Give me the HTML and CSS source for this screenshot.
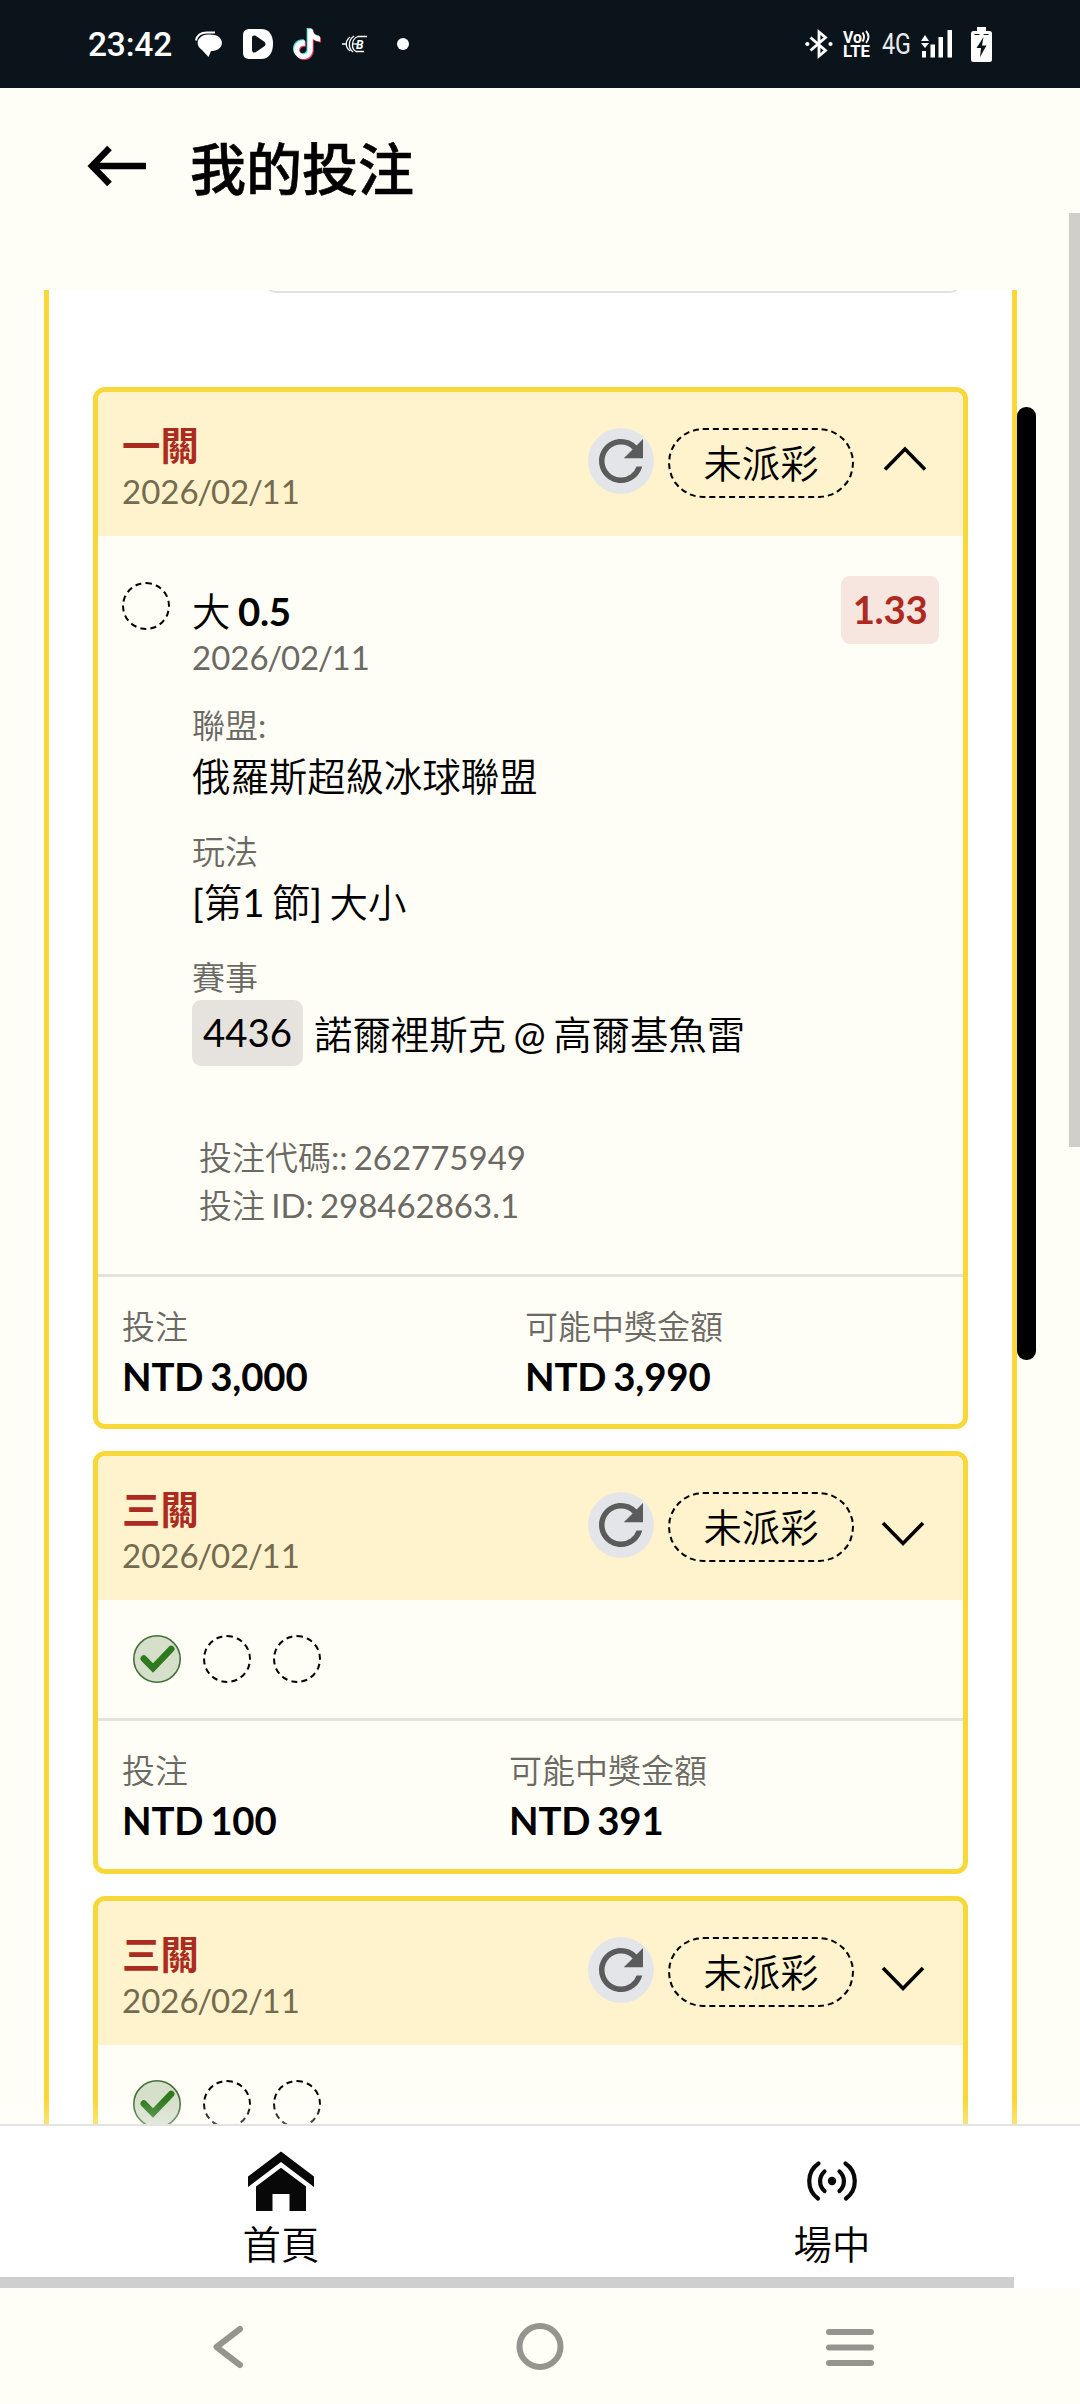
FILE: index.html
```html
<!DOCTYPE html>
<html lang="zh-Hant-TW">
<head>
<meta charset="utf-8">
<title>我的投注</title>
<link rel="stylesheet" href="styles.css">
</head>
<body>
<svg class="defs" width="0" height="0" aria-hidden="true">
  <symbol id="refresh" viewBox="0 0 24 24"><path d="M17.65 6.35A7.958 7.958 0 0 0 12 4c-4.42 0-7.99 3.58-7.99 8s3.57 8 7.99 8c3.73 0 6.84-2.55 7.73-6h-2.08A5.99 5.99 0 0 1 12 18c-3.31 0-6-2.69-6-6s2.69-6 6-6c1.66 0 3.14.69 4.22 1.78L13 11h7V4z"/></symbol>
  <symbol id="note" viewBox="0 0 24 24"><path d="M12.525.02c1.31-.02 2.61-.01 3.91-.02.08 1.53.63 3.09 1.75 4.17 1.12 1.11 2.7 1.62 4.24 1.79v4.03c-1.44-.05-2.89-.35-4.2-.97-.57-.26-1.1-.59-1.62-.93-.01 2.92.01 5.84-.02 8.75-.08 1.4-.54 2.79-1.35 3.94-1.31 1.92-3.58 3.17-5.91 3.21-1.43.08-2.86-.31-4.08-1.03-2.02-1.19-3.44-3.37-3.65-5.71-.02-.5-.03-1-.01-1.49.18-1.9 1.12-3.72 2.58-4.96 1.66-1.44 3.98-2.13 6.15-1.72.02 1.48-.04 2.96-.04 4.44-.99-.32-2.15-.23-3.02.37-.63.41-1.11 1.04-1.36 1.75-.21.51-.15 1.07-.14 1.61.24 1.64 1.82 3.02 3.5 2.87 1.12-.01 2.19-.66 2.77-1.61.19-.33.4-.67.41-1.06.1-1.79.06-3.57.07-5.36.01-4.03-.01-8.05.02-12.07z"/></symbol>
  <symbol id="chevron-up" viewBox="0 0 48 70"><path d="M5 41.5 25 21 45 41.5" fill="none" stroke="#000" stroke-width="3.6"/></symbol>
  <symbol id="chevron-down" viewBox="0 0 48 70"><path d="M3 31 23 51.5 43 31" fill="none" stroke="#000" stroke-width="3.6"/></symbol>
  <symbol id="won" viewBox="0 0 48 48"><circle cx="24" cy="24" r="23.2" fill="#d6dfca" stroke="#44703c" stroke-width="1.6"/><path d="M10.8 23.6 20 33 38.2 14" fill="none" stroke="#2f7a1f" stroke-width="6.6" stroke-linecap="round"/></symbol>
</svg>

<div class="status-bar">
  <span class="clock">23:42</span>
  <svg class="i-msg" width="28" height="28" viewBox="0 0 28 28"><path d="M8 4.5C12 3 20 3 24 6c4 3.5 4 9-.5 12-2 1.500-5 2-7.500 2l-2.500 6L7 19C1 15 1 8 8 4.500z" fill="#fff"/><path d="M1 9.500C2 4 6 1.400 12 1.400h8" fill="none" stroke="#fff" stroke-width="2"/></svg>
  <svg class="i-play" width="30" height="30" viewBox="0 0 30 30"><path d="M7 0h11c8 0 12 6 12 14.500C30 24 26 30 18 30H7c-5 0-7-2-7-7V7c0-5 2-7 7-7z" fill="#fff"/><path d="M9 9c0-2.500 2-3 4-2l8 5.500c2 1.500 2 3.500 0 5L13 23c-2 1.200-4 .5-4-2z" fill="#0c141b"/></svg>
  <svg class="i-tok" width="32" height="34" viewBox="0 0 32 34"><use href="#note" x="0" y="0" width="30" height="32" fill="#3fe0d8"/><use href="#note" x="2" y="2" width="30" height="32" fill="#ee3a5e"/><use href="#note" x="1" y="1" width="30" height="32" fill="#fff"/></svg>
  <svg class="i-bb" width="26" height="18" viewBox="0 0 26 18"><g fill="none" stroke="#fff" stroke-width="1.300"><path d="M0 9h4M8 2C3 6 3 12 8 16M12 1C6 5 6 13 11 17M25 1.500h-9C9 4 9 14 14 16.500h8"/><path d="M10 9h5"/></g><text x="14" y="13.500" class="bb">B</text></svg>
  <svg class="i-dot" width="12" height="12"><circle cx="6" cy="6" r="6" fill="#fff"/></svg>
  <span class="spring"></span>
  <svg class="i-bt" width="28" height="28" viewBox="0 0 28 28"><path d="M5.500 7.500 20.500 20.500 14 26V2l6.500 5.500L5.500 20.500" fill="none" stroke="#fff" stroke-width="2.800"/><circle cx="2.300" cy="14" r="2.100" fill="#fff"/><circle cx="25.500" cy="14" r="2.100" fill="#fff"/></svg>
  <svg class="i-volte" width="28" height="28" viewBox="0 0 28 28"><text x="0" y="12.500" class="vo" textLength="19" lengthAdjust="spacingAndGlyphs">Vo</text><text x="0" y="27.300" class="vo" textLength="27" lengthAdjust="spacingAndGlyphs">LTE</text><path d="M19.500 2.500q3 4.500 0 9M23 .8q5 6 0 12" fill="none" stroke="#fff" stroke-width="1.900"/></svg>
  <svg class="i-4g" width="29" height="28" viewBox="0 0 29 28"><text x="0" y="24" class="net" textLength="29" lengthAdjust="spacingAndGlyphs">4G</text></svg>
  <svg class="i-sig" width="31" height="28" viewBox="0 0 31 28"><path d="M0 11 4 5l4 6zM0 13h8l-4 5zM1 21h4v6.500H1zM9.500 14.500H14v13H9.500zM17.500 7H22v20.500h-4.500zM26.500 0H31v27.500h-4.500z" fill="#fff"/></svg>
  <svg class="i-bat" width="21" height="35" viewBox="0 0 21 35"><path d="M6 0h9v4h3.500Q21 4 21 6.500v26Q21 35 18.500 35h-16Q0 35 0 32.500v-26Q0 4 2.500 4H6z" fill="#fff"/><path d="M12.500 10 5.500 21H10l-1 9 6.500-11.500H11zM3.500 7h5v1h-5zM12.500 7h5v1h-5z" fill="#0c141b"/></svg>
</div>

<header class="page-head">
  <svg width="58" height="40" viewBox="0 0 58 40"><path d="M58 20H4M21.500 2 4 20l17.500 18" fill="none" stroke="#000" stroke-width="6.500"/></svg>
  <h1>我的投注</h1>
</header>

<main class="viewport">
  <section class="panel">
    <div class="filter"></div>
    <div class="cards">
      <article class="card">
        <div class="card-head">
          <div><div class="kind">一關</div><div class="date">2026<i>/</i>02<i>/</i>11</div></div>
          <div class="actions">
            <svg class="refresh"><use href="#refresh"/></svg>
            <span class="pill">未派彩</span>
            <svg class="chev"><use href="#chevron-up"/></svg>
          </div>
        </div>
        <div class="detail">
          <span class="ring"></span>
          <div class="info">
            <div class="pick">大 <b>0.5</b></div>
            <div class="date">2026<i>/</i>02<i>/</i>11</div>
            <dl class="fields">
              <div><dt>聯盟:</dt><dd>俄羅斯超級冰球聯盟</dd></div>
              <div><dt>玩法</dt><dd>[第1 節] 大小</dd></div>
              <div><dt>賽事</dt><dd class="match"><span class="code">4436</span><span class="teams">諾爾裡斯克 @ 高爾基魚雷</span></dd></div>
            </dl>
            <div class="ids"><div>投注代碼:: 262775949</div><div>投注 ID: 298462863.1</div></div>
          </div>
          <span class="odds">1.33</span>
        </div>
        <div class="sums">
          <div><div class="label">投注</div><div class="money">NTD 3,000</div></div>
          <div><div class="label">可能中獎金額</div><div class="money">NTD 3,990</div></div>
        </div>
      </article>

      <article class="card">
        <div class="card-head">
          <div><div class="kind">三關</div><div class="date">2026<i>/</i>02<i>/</i>11</div></div>
          <div class="actions">
            <svg class="refresh"><use href="#refresh"/></svg>
            <span class="pill">未派彩</span>
            <svg class="chev"><use href="#chevron-down"/></svg>
          </div>
        </div>
        <div class="legs"><svg class="won"><use href="#won"/></svg><span class="ring"></span><span class="ring"></span></div>
        <div class="sums narrow">
          <div><div class="label">投注</div><div class="money">NTD 100</div></div>
          <div><div class="label">可能中獎金額</div><div class="money">NTD 391</div></div>
        </div>
      </article>

      <article class="card">
        <div class="card-head">
          <div><div class="kind">三關</div><div class="date">2026<i>/</i>02<i>/</i>11</div></div>
          <div class="actions">
            <svg class="refresh"><use href="#refresh"/></svg>
            <span class="pill">未派彩</span>
            <svg class="chev"><use href="#chevron-down"/></svg>
          </div>
        </div>
        <div class="legs"><svg class="won"><use href="#won"/></svg><span class="ring"></span><span class="ring"></span></div>
      </article>
    </div>
  </section>
  <div class="thumb"></div>
</main>

<nav class="tabs">
  <a class="tab">
    <svg width="66" height="60" viewBox="0 0 66 60"><path d="M33 .5 66 25.500V36L33 11 0 36V25.500zM33 16.700 58 35.500V60H41.500V43h-17v17H8V35.500z" fill="#080808"/></svg>
    <span>首頁</span>
  </a>
  <a class="tab">
    <svg class="live" width="50" height="40" viewBox="0 0 50 40"><g fill="none" stroke="#080808" stroke-width="4.200" stroke-linecap="round"><path d="M11.500 2.500A21.500 21.500 0 0 0 11 37.500M38.500 2.500A21.500 21.500 0 0 1 39 37.500M17.500 10.500A13 13 0 0 0 17.500 30M32.500 10.500A13 13 0 0 1 32.500 30"/></g><circle cx="25" cy="20" r="4.200" fill="#080808"/></svg>
    <span>場中</span>
  </a>
  <div class="h-thumb"></div>
</nav>

<div class="sys-nav">
  <svg width="48" height="48" viewBox="0 0 48 48"><path d="M34 6 10.500 24 34 42" fill="none" stroke="#96948e" stroke-width="6" stroke-linecap="round" stroke-linejoin="round"/></svg>
  <svg width="48" height="48" viewBox="0 0 48 48"><circle cx="24" cy="23.500" r="20.500" fill="none" stroke="#96948e" stroke-width="6"/></svg>
  <svg width="48" height="48" viewBox="0 0 48 48"><path d="M3 9h42M3 24.500h42M3 40h42" stroke="#96948e" stroke-width="6" stroke-linecap="round"/></svg>
</div>
<div class="page-thumb"></div>
</body>
</html>
```
FILE: styles.css
```css
* { box-sizing: border-box; margin: 0; padding: 0; }
body {
  width: 1080px;
  height: 2404px;
  position: relative;
  overflow: hidden;
  display: flex;
  flex-direction: column;
  background: #fffef6;
  color: #000;
  font: 38.4px/46px Lato, "Noto Sans CJK TC DemiLight", "Noto Sans CJK TC", sans-serif;
  word-spacing: -2.3px;
}
svg { display: block; flex: none; overflow: visible; }
.defs { position: absolute; }

/* status bar */
.status-bar {
  flex: none;
  height: 88px;
  display: flex;
  align-items: center;
  padding: 0 88px 0 88px;
  background: #0c141b;
}
.clock { width: 84px; font: 500 33.5px/40px Roboto, sans-serif; letter-spacing: -.2px; color: #fff; white-space: nowrap; margin-top: 2px; }
.i-msg { margin-left: 23px; margin-top: 2px; }
.i-play { margin-left: 20px; }
.i-tok { margin-left: 18px; }
.i-bb { margin-left: 19px; }
.bb { font: italic 700 12px Roboto, sans-serif; fill: #fff; }
.i-dot { margin-left: 29px; }
.spring { flex: 1; }
.vo { font: 700 16px Roboto, sans-serif; fill: #fff; }
.net { font: 400 29.5px Roboto, sans-serif; fill: #e8ebf0; }
.i-volte { margin-left: 10px; }
.i-4g { margin-left: 11px; }
.i-sig { margin-left: 10px; }
.i-bat { margin-left: 19px; }

/* title */
.page-head {
  flex: none;
  height: 202px;
  padding: 44px 88px 0;
  display: flex;
  align-items: flex-start;
  gap: 44px;
}
.page-head svg { margin-top: 14px; }
.page-head h1 { font: 500 56px/68px "Noto Sans CJK TC", sans-serif; -webkit-text-stroke: .6px #000; }

/* scrolled list */
.viewport { position: relative; flex: none; height: 1834px; overflow: hidden; }
.viewport::after {
  content: "";
  position: absolute;
  inset: auto 0 0 0;
  height: 24px;
  background: linear-gradient(rgba(255, 255, 255, 0), rgba(255, 255, 255, .3));
}
.panel {
  width: 973px;
  margin-left: 44px;
  min-height: 100%;
  display: flow-root;
  background: #fff;
  border: solid #f7d838;
  border-width: 0 5px;
}
.filter {
  height: 40px;
  margin: -37px 50px 0 215px;
  border: 2px solid #e5e1de;
  border-radius: 12px;
}
.cards { padding: 94px 44px 0; display: flex; flex-direction: column; gap: 22px; }
.card {
  border: 5px solid #f7d838;
  border-radius: 12px;
  background: #fffef6;
  overflow: hidden;
}
.card-head {
  height: 144px;
  padding: 0 35px 0 24px;
  display: flex;
  justify-content: space-between;
  background: #fff3cd;
}
.card-head > div:first-child { padding-top: 30px; }
.kind { font-family: Lato, "Noto Sans CJK TC", sans-serif; font-weight: 700; color: #ad2a20; }
.date { font-size: 33px; color: #6b6963; }
.date i { font-style: normal; margin: 0 -1.3px; }
.card-head .date { color: #746a4e; }
.actions { display: flex; align-items: flex-start; padding-top: 36px; }
.refresh { width: 66px; height: 66px; border-radius: 50%; background: #e4e5e9; fill: #5b5b5b; }
.pill {
  width: 186px;
  height: 70px;
  margin-left: 14px;
  border: 2px dashed #000;
  border-radius: 35px;
  line-height: 67px;
  text-align: center;
}
.chev { width: 48px; height: 70px; margin-left: 26px; }

.detail { height: 738px; padding: 0 24px; display: flex; align-items: flex-start; }
.ring { width: 48px; height: 48px; border: 2px dashed #000; border-radius: 50%; flex: none; }
.detail .ring { margin-top: 46px; }
.info { flex: 1; padding: 52px 0 0 22px; }
.pick b { letter-spacing: -.3px; }
.fields { margin-top: 22px; display: flex; flex-direction: column; gap: 24px; }
.fields dt, .label, .ids { font-size: 33px; color: #6b6963; }
.fields dd { line-height: 57px; margin-bottom: -1px; }
.fields .match { display: flex; align-items: center; gap: 11px; line-height: 66px; margin: -1px 0 0; }
.match span { white-space: nowrap; }
.match .teams { padding-top: 2px; }
.code {
  height: 66px;
  padding: 0 11px;
  border-radius: 9px;
  background: #e6e2de;
  line-height: 65px;
}
.ids { padding: 66px 0 0 7px; line-height: 48px; }
.odds {
  width: 98px;
  height: 68px;
  margin: 40px 0 0 0;
  border-radius: 9px;
  background: #f7e6e0;
  color: #ad2a20;
  font-weight: 700;
  letter-spacing: -.3px;
  line-height: 67px;
  text-align: center;
}
.sums {
  display: grid;
  grid-template-columns: 403px 1fr;
  padding: 26px 24px 22px;
  border-top: 3px solid #e5e1dc;
}
.sums.narrow { grid-template-columns: 387px 1fr; }
.money { font-weight: 700; line-height: 52px; padding-top: 1px; letter-spacing: -.15px; }
.legs { height: 118px; padding-left: 35px; display: flex; align-items: center; gap: 22px; }
.legs + .sums { padding-bottom: 23px; }
.won { width: 48px; height: 48px; }

.thumb { position: absolute; left: 1017px; top: 117px; width: 19px; height: 953px; border-radius: 9px; background: #000; }
.page-thumb { position: absolute; right: 0; top: 213px; width: 11px; height: 934px; background: #d0cfc9; }

/* bottom tabs */
.tabs {
  position: relative;
  flex: none;
  height: 164px;
  display: grid;
  grid-template-columns: 562px 540px;
  background: #fff;
  border-top: 2px solid #e3e3e1;
}
.tab { display: flex; flex-direction: column; align-items: center; padding-top: 25px; }
.tab .live { margin: 10px 0; }
.tab span { margin-top: 10px; }
.h-thumb { position: absolute; left: 0; bottom: 0; width: 1014px; height: 11px; background: #cfcfcf; }

.sys-nav { flex: 1; display: flex; justify-content: space-between; padding: 35px 206px 0; }
```
